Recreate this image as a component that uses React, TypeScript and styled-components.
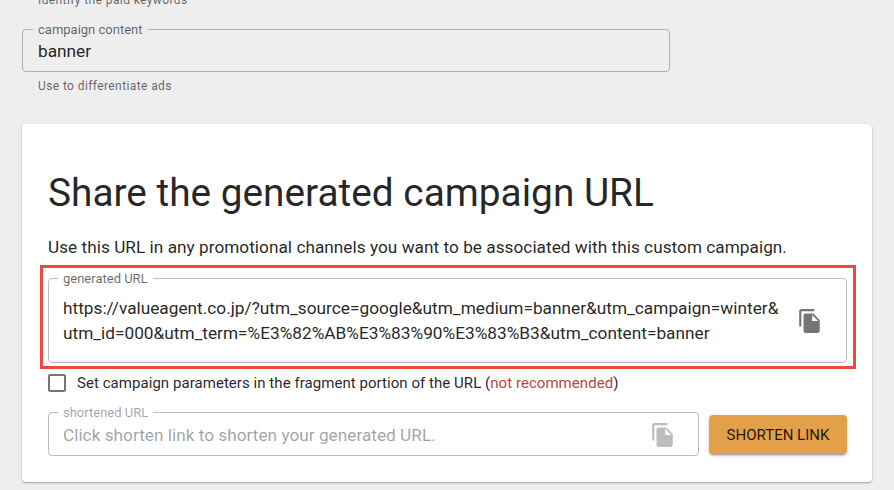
import React from 'react'
import styled, { createGlobalStyle } from 'styled-components'

const GlobalStyle = createGlobalStyle`
  html, body {
    margin: 0;
    height: 490px;
    overflow: hidden;
    background: #eeeeee;
    font-family: Roboto, "Liberation Sans", sans-serif;
  }
`

const Page = styled.div`
  display: flex;
  flex-direction: column;
  width: 850px;
  margin: -8px 0 0 22px;
`

const Helper = styled.p`
  margin: 0;
  padding-left: 16px;
  font-size: 12px;
  line-height: 16px;
  letter-spacing: 0.4px;
  color: rgba(0, 0, 0, 0.6);
`

const Outline = styled.fieldset`
  display: flex;
  align-items: center;
  box-sizing: border-box;
  min-width: 0;
  margin: 0;
  padding: 0 14px;
  border: 1px solid rgba(0, 0, 0, 0.26);
  border-radius: 4px;
  font-size: 17.25px;
`

const Legend = styled.legend<{ $disabled?: boolean }>`
  margin-left: -5px;
  padding: 0 5px;
  font-size: 13px;
  line-height: 13px;
  color: ${({ $disabled }) => ($disabled ? 'rgba(0, 0, 0, 0.38)' : 'rgba(0, 0, 0, 0.6)')};
`

const ContentField = styled(Outline)`
  width: 648px;
  height: 49px;
  margin-top: 15px;
  padding: 5px 15px 0;
  color: rgba(0, 0, 0, 0.87);
`

const ContentHelper = styled(Helper)`
  margin-top: 6px;
`

const Card = styled.section`
  box-sizing: border-box;
  height: 358px;
  margin-top: 30px;
  padding: 49px 25px 0 26px;
  background: #ffffff;
  border-radius: 4px;
  box-shadow: 0 1px 2px rgba(0, 0, 0, 0.35);
`

const Title = styled.h2`
  margin: 0;
  font-size: 38.8px;
  line-height: 40px;
  font-weight: 400;
  color: rgba(0, 0, 0, 0.87);
`

const Lead = styled.p`
  margin: 22px 0 0;
  font-size: 17.2px;
  line-height: 24px;
  letter-spacing: 0.04px;
  color: rgba(0, 0, 0, 0.87);
`

const Highlight = styled.div`
  box-sizing: border-box;
  width: 816px;
  height: 104px;
  margin: 6px 0 0 -8px;
  padding: 4px 5px;
  border: 3px solid #ec4a40;
`

const UrlField = styled(Outline)`
  width: 799px;
  height: 91px;
  justify-content: space-between;
  padding-bottom: 5px;
`

const UrlText = styled.div`
  width: 730px;
  line-height: 25px;
  color: rgba(0, 0, 0, 0.87);
  white-space: nowrap;
`

const CopyIcon = styled.svg<{ $disabled?: boolean }>`
  flex: none;
  width: 26px;
  height: 26px;
  margin-right: 9px;
  fill: ${({ $disabled }) => ($disabled ? 'rgba(0, 0, 0, 0.26)' : 'rgba(0, 0, 0, 0.54)')};
`

const CheckRow = styled.label`
  display: flex;
  align-items: center;
  gap: 8px;
  height: 24px;
  margin: 2px 0 0 -3px;
  font-size: 15px;
  letter-spacing: 0.05px;
  color: rgba(0, 0, 0, 0.87);
`

const CheckIcon = styled.svg`
  width: 24px;
  height: 24px;
  fill: rgba(0, 0, 0, 0.54);
`

const Warning = styled.span`
  color: #b5483f;
`

const ShortenRow = styled.div`
  display: flex;
  align-items: flex-end;
  gap: 10px;
  margin-top: 11px;
`

const ShortField = styled(Outline)`
  flex: 1;
  height: 50px;
  justify-content: space-between;
  padding-bottom: 4px;
  color: rgba(0, 0, 0, 0.38);

  ${CopyIcon} {
    margin-right: 8px;
  }
`

const ShortenButton = styled.button`
  width: 138px;
  height: 39px;
  margin-bottom: 2px;
  padding: 0;
  border: 0;
  border-radius: 4px;
  background: #e49f49;
  font-family: inherit;
  font-size: 15px;
  font-weight: 400;
  color: rgba(0, 0, 0, 0.87);
  box-shadow: 0 3px 1px -2px rgba(0, 0, 0, 0.2), 0 2px 2px rgba(0, 0, 0, 0.14), 0 1px 5px rgba(0, 0, 0, 0.12);
`

const FileCopy = ({ disabled }: { disabled?: boolean }) => (
  <CopyIcon $disabled={disabled} viewBox='0 0 24 24'>
    <path d='M16 1H4c-1.1 0-2 .9-2 2v14h2V3h12V1zm-1 4l6 6v10c0 1.1-.9 2-2 2H7.99C6.89 23 6 22.1 6 21l.01-14c0-1.1.89-2 1.99-2h7zm-1 7h5.5L14 6.5V12z' />
  </CopyIcon>
)

const App = () => (
  <Page>
    <GlobalStyle />
    <Helper>Identify the paid keywords</Helper>
    <ContentField>
      <Legend>campaign content</Legend>
      banner
    </ContentField>
    <ContentHelper>Use to differentiate ads</ContentHelper>
    <Card>
      <Title>Share the generated campaign URL</Title>
      <Lead>Use this URL in any promotional channels you want to be associated with this custom campaign.</Lead>
      <Highlight>
        <UrlField>
          <Legend>generated URL</Legend>
          <UrlText>
            https://valueagent.co.jp/?utm_source=google&amp;utm_medium=banner&amp;utm_campaign=winter&amp;
            <br />
            utm_id=000&amp;utm_term=%E3%82%AB%E3%83%90%E3%83%B3&amp;utm_content=banner
          </UrlText>
          <FileCopy />
        </UrlField>
      </Highlight>
      <CheckRow>
        <CheckIcon viewBox='0 0 24 24'>
          <path d='M19 5v14H5V5h14m0-2H5c-1.1 0-2 .9-2 2v14c0 1.1.9 2 2 2h14c1.1 0 2-.9 2-2V5c0-1.1-.9-2-2-2z' />
        </CheckIcon>
        <span>
          Set campaign parameters in the fragment portion of the URL (<Warning>not recommended</Warning>)
        </span>
      </CheckRow>
      <ShortenRow>
        <ShortField>
          <Legend $disabled>shortened URL</Legend>
          Click shorten link to shorten your generated URL.
          <FileCopy disabled />
        </ShortField>
        <ShortenButton>SHORTEN LINK</ShortenButton>
      </ShortenRow>
    </Card>
  </Page>
)

export default App
